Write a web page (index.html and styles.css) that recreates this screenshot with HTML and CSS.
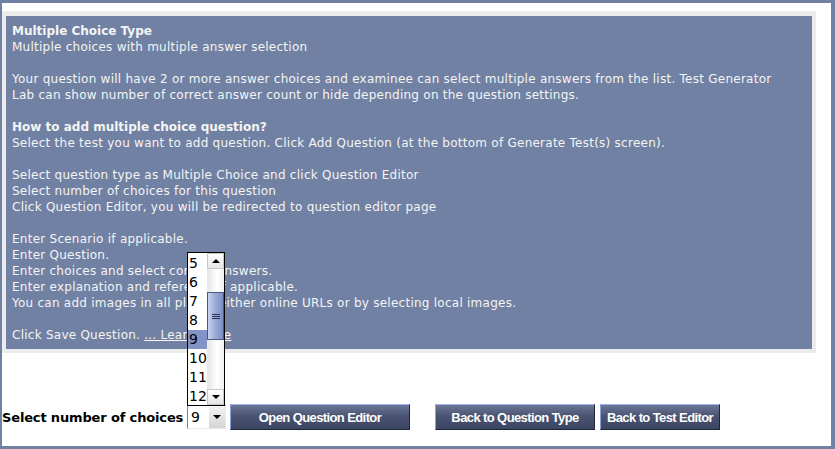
FILE: index.html
```html
<!DOCTYPE html>
<html lang="en">
<head>
  <meta charset="UTF-8" />
  <title>Multiple Choice Type</title>
  <link rel="stylesheet" href="styles.css">
</head>
<body>
  <div class="frame">

    <div class="info-wrap">
      <div class="info">
        <b>Multiple Choice Type</b><br/>
        Multiple choices with multiple answer selection<br/>
        <br/>
        Your question will have 2 or more answer choices and examinee can select multiple answers from the list. Test Generator Lab can show number of correct answer count or hide depending on the question settings.<br/>
        <br/>
        <b>How to add multiple choice question?</b><br/>
        Select the test you want to add question. Click Add Question (at the bottom of Generate Test(s) screen).<br/>
        <br/>
        Select question type as Multiple Choice and click Question Editor<br/>
        Select number of choices for this question<br/>
        Click Question Editor, you will be redirected to question editor page<br/>
        <br/>
        Enter Scenario if applicable.<br/>
        Enter Question.<br/>
        Enter choices and select correct answers.<br/>
        Enter explanation and reference if applicable.<br/>
        You can add images in all places either online URLs or by selecting local images.<br/>
        <br/>
        Click Save Question. <a href="#">... Learn more</a>
      </div>
    </div>

    <div class="controls">
      <span class="label">Select number of choices</span>

      <div class="picker">
        <div class="picker-list">
          <div class="options">
            <div class="opt">5</div>
            <div class="opt">6</div>
            <div class="opt">7</div>
            <div class="opt">8</div>
            <div class="opt active">9</div>
            <div class="opt">10</div>
            <div class="opt">11</div>
            <div class="opt">12</div>
          </div>
          <div class="scrollbar">
            <div class="sb-btn"><span class="tri up"></span></div>
            <div class="sb-track">
              <div class="sb-thumb"><span class="grip"></span></div>
            </div>
            <div class="sb-btn"><span class="tri down"></span></div>
          </div>
        </div>
        <div class="picker-box">
          <span class="picker-value">9</span>
          <span class="picker-arrow"><span class="tri down"></span></span>
        </div>
      </div>

      <button class="btn btn-open">Open Question Editor</button>
      <button class="btn btn-type">Back to Question Type</button>
      <button class="btn btn-test">Back to Test Editor</button>
    </div>

  </div>
</body>
</html>
```

FILE: styles.css
```css
html, body {
    margin: 0;
    padding: 0;
    background: #ffffff;
}

.frame {
    box-sizing: border-box;
    width: 835px;
    height: 449px;
    border-style: solid;
    border-color: #7181a3;
    border-width: 3px 4px 3px 2px;
    background: #ffffff;
    padding-top: 8px;
}

.info-wrap {
    background: #ececec;
    margin-right: 15px;
    padding: 5px 4px 4px 4px;
}

.info {
    background: #7181a3;
    color: #f4f4f4;
    font-family: "DejaVu Sans", Verdana, sans-serif;
    font-size: 12px;
    letter-spacing: 0.25px;
    line-height: 16px;
    padding: 7px 20px 6px 6px;
    height: 333px;
    box-sizing: border-box;
}

.info b {
    font-weight: bold;
    letter-spacing: 0;
}

.info a {
    color: #f4f4f4;
    text-decoration: underline;
}

.controls {
    display: flex;
    align-items: center;
    margin-top: 51px;
    height: 26px;
}

.label {
    font-family: "DejaVu Sans", Verdana, sans-serif;
    font-weight: bold;
    font-size: 13px;
    letter-spacing: -0.15px;
    color: #000;
    width: 185px;
}

/* select box with its list opened above */
.picker {
    position: relative;
    width: 39px;
    height: 24px;
    margin-right: 4px;
}

.picker-box {
    box-sizing: border-box;
    width: 39px;
    height: 24px;
    background: #fff;
    border: 1px solid;
    border-color: #808080 #e8e8e8 #e8e8e8 #808080;
    display: flex;
    align-items: center;
    font-family: "DejaVu Sans", Verdana, sans-serif;
    font-size: 14px;
}

.picker-value {
    flex: 1;
    padding-left: 3px;
}

.picker-arrow {
    width: 16px;
    height: 22px;
    background: linear-gradient(#f4f4f4, #d4d4d4);
    display: flex;
    align-items: center;
    justify-content: center;
}

.picker-list {
    position: absolute;
    left: 0;
    bottom: 23px;
    width: 38px;
    height: 154px;
    box-sizing: border-box;
    border: 1px solid #000;
    background: #fff;
    display: flex;
}

.options {
    width: 19px;
    font-family: "DejaVu Sans", Verdana, sans-serif;
    font-size: 14px;
    line-height: 19px;
    color: #000;
    padding-top: 1px;
}

.opt {
    height: 19px;
    padding-left: 1px;
    overflow: hidden;
}

.opt.active {
    background: #8393c6;
}

.scrollbar {
    width: 17px;
    display: flex;
    flex-direction: column;
    background: #fff;
}

.sb-btn {
    height: 16px;
    background: linear-gradient(#ffffff, #e6e6e6);
    border: 1px solid #c8c8c8;
    box-sizing: border-box;
    display: flex;
    align-items: center;
    justify-content: center;
}

.sb-track {
    flex: 1;
    background: linear-gradient(90deg, #e6e6e6, #ffffff 60%, #f0f0f0);
    padding-top: 23px;
}

.sb-thumb {
    height: 48px;
    box-sizing: border-box;
    border: 1px solid #4c5878;
    background: linear-gradient(90deg, #c9d2ee, #98a8d8 50%, #7e8fc4);
    display: flex;
    align-items: center;
    justify-content: center;
}

.grip {
    width: 8px;
    height: 5px;
    border-top: 1px solid #2c3450;
    border-bottom: 1px solid #2c3450;
    box-sizing: border-box;
    position: relative;
}

.grip::after {
    content: "";
    position: absolute;
    left: 0;
    right: 0;
    top: 1px;
    border-top: 1px solid #2c3450;
}

.tri {
    width: 0;
    height: 0;
    border-left: 4px solid transparent;
    border-right: 4px solid transparent;
}

.tri.up {
    border-bottom: 4px solid #000;
}

.tri.down {
    border-top: 4px solid #000;
}

/* action buttons */
.btn {
    box-sizing: border-box;
    height: 26px;
    padding: 0;
    font-family: "Liberation Sans", Arial, sans-serif;
    font-weight: bold;
    font-size: 13px;
    letter-spacing: -0.6px;
    white-space: nowrap;
    color: #ffffff;
    background: linear-gradient(#6c7797, #4a5472 45%, #3c4562);
    border: 1px solid;
    border-color: #9fb4f0 #1f2538 #1f2538 #8aa0e0;
    cursor: pointer;
}

.btn-open {
    width: 180px;
}

.btn-type {
    width: 160px;
    margin-left: 25px;
}

.btn-test {
    width: 120px;
    margin-left: 5px;
}
```
